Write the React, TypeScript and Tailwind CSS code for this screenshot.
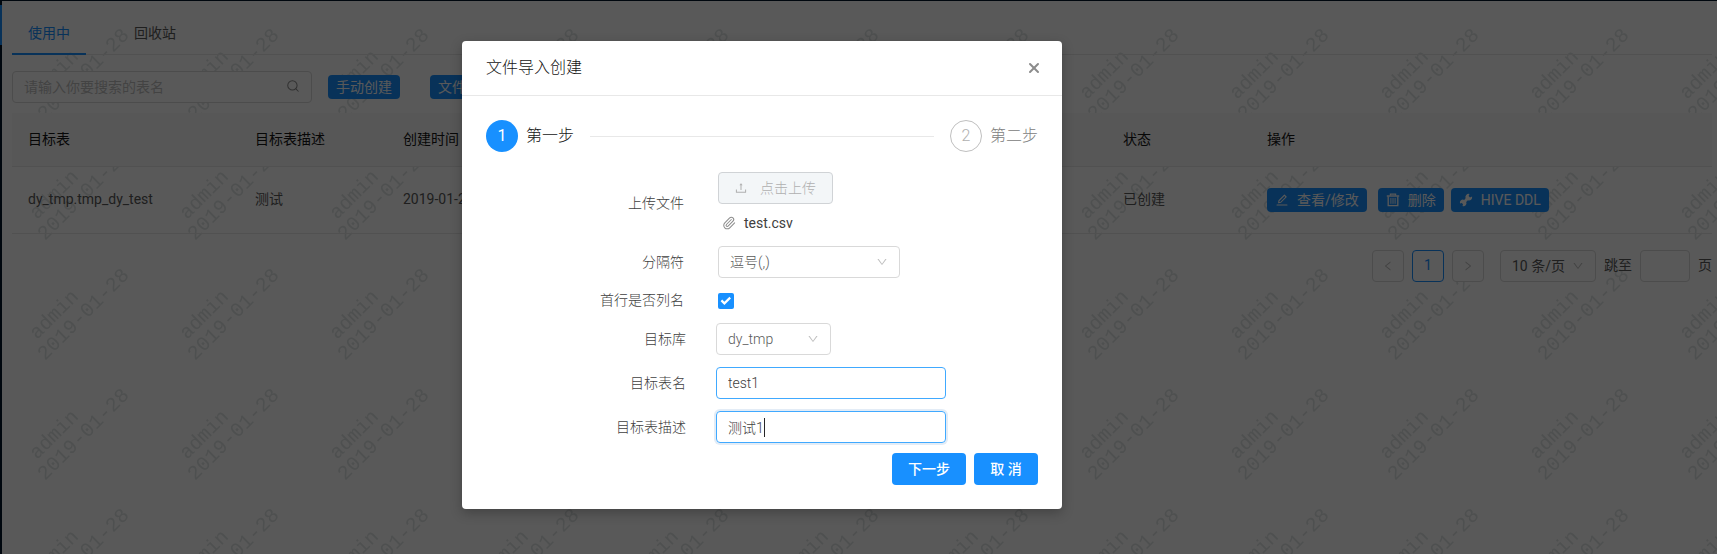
import React from "react";
import {
  AiOutlineDown,
  AiOutlineEdit,
  AiOutlineLeft,
  AiOutlineRight,
  AiOutlineUpload,
} from "react-icons/ai";
import { Paperclip, Search, X } from "lucide-react";

function Watermark() {
  return (
    <svg className="absolute inset-0 h-full w-full" aria-hidden="true">
      <defs>
        <pattern id="watermark" width="150" height="120" patternUnits="userSpaceOnUse" x="0" y="0">
          <g fill="#e0e4e4" fontFamily="'Liberation Mono', monospace" fontSize="20">
            <text transform="translate(35 99) rotate(-45)">admin</text>
            <text transform="translate(43 120) rotate(-45)">2019-01-28</text>
          </g>
        </pattern>
      </defs>
      <rect width="100%" height="100%" fill="url(#watermark)" />
    </svg>
  );
}

function TrashIcon() {
  return (
    <svg className="size-3.5" viewBox="0 0 14 14" fill="none" stroke="currentColor" aria-hidden="true">
      <path d="M0.8 3h12.4" strokeWidth="1.4" />
      <path d="M4.4 2.6V1.1h5.2v1.5" strokeWidth="1.2" />
      <path d="M2.2 3.4v9.3h9.6V3.4" strokeWidth="1.3" />
      <path d="M4.9 5v5.8M7 5v5.8M9.1 5v5.8" strokeWidth="0.9" />
    </svg>
  );
}

function WrenchIcon() {
  return (
    <svg className="size-3.5" viewBox="0 0 14 14" fill="currentColor" aria-hidden="true">
      <path d="M13.1 3.6 11 4.5 9.6 3.1l.9-2.1a3.2 3.2 0 0 0-3.9 4.2L5.2 6.9A3 3 0 0 0 1 10.5l1.8-.5 1.2 1.2-.5 1.8a3 3 0 0 0 3.7-4.1l1.7-1.6a3.2 3.2 0 0 0 4.2-3.7Z" />
    </svg>
  );
}

function SmallButton({ icon, children }: { icon?: React.ReactNode; children: React.ReactNode }) {
  return (
    <button
      type="button"
      className="inline-flex h-6 items-center gap-2 rounded bg-[#1890ff] px-2 text-sm whitespace-nowrap text-white"
    >
      {icon}
      <span>{children}</span>
    </button>
  );
}

function PageButton({ label, active, children }: { label: string; active?: boolean; children: React.ReactNode }) {
  return (
    <button
      type="button"
      aria-label={label}
      className={
        active
          ? "flex size-8 items-center justify-center rounded border border-[#1890ff] bg-white text-[#1890ff]"
          : "flex size-8 items-center justify-center rounded border border-[#d9d9d9] bg-white text-xs text-[#bfbfbf]"
      }
    >
      {children}
    </button>
  );
}

function Dropdown({ id, label, width, value }: { id: string; label?: string; width: string; value: string }) {
  return (
    <div className={"relative " + width}>
      <select
        id={id}
        aria-label={label}
        className="block h-8 w-full appearance-none rounded border border-[#d9d9d9] bg-white pr-6 pl-[11px] text-sm text-[#595959]"
      >
        <option>{value}</option>
      </select>
      <AiOutlineDown className="pointer-events-none absolute top-2.5 right-3 size-3 text-[#bfbfbf]" />
    </div>
  );
}

function TablePage() {
  return (
    <main className="relative min-w-0 flex-1 bg-white">
      <Watermark />
      <div className="relative pt-[9px] pr-[5px] pl-2.5">
        <nav className="flex h-[45px] gap-8 border-b border-[#e8e8e8]">
          <a href="#active" className="h-[45px] border-b-2 border-[#1890ff] px-4 pt-[13px] leading-[21px] text-[#1890ff]">
            使用中
          </a>
          <a href="#recycle" className="h-[45px] px-4 pt-[13px] leading-[21px]">
            回收站
          </a>
        </nav>

        <div className="mt-4 flex items-center">
          <div className="relative w-[300px]">
            <input
              type="text"
              aria-label="搜索表名"
              placeholder="请输入你要搜索的表名"
              className="block h-8 w-full rounded border border-[#d9d9d9] bg-white px-[11px] text-sm placeholder:text-[#bfbfbf]"
            />
            <Search strokeWidth={1.75} className="absolute top-2 right-3 size-3.5 text-[#8c8c8c]" />
          </div>
          <div className="ml-4 flex gap-[30px]">
            <SmallButton>手动创建</SmallButton>
            <SmallButton>文件导入创建</SmallButton>
          </div>
        </div>

        <table className="mt-2.5 w-full table-fixed border-collapse text-left">
          <colgroup>
            <col className="w-[227px]" />
            <col className="w-[148px]" />
            <col />
            <col className="w-36" />
            <col className="w-[461px]" />
          </colgroup>
          <thead>
            <tr className="h-[53px] border-b border-[#e8e8e8] bg-[#fafafa] text-[#141414]">
              <th className="px-4 font-normal">目标表</th>
              <th className="px-4 font-normal">目标表描述</th>
              <th className="px-4 font-normal">创建时间</th>
              <th className="px-4 font-normal">状态</th>
              <th className="px-4 font-normal">操作</th>
            </tr>
          </thead>
          <tbody>
            <tr className="h-[67px] border-b border-[#e8e8e8]">
              <td className="px-4">dy_tmp.tmp_dy_test</td>
              <td className="px-4">测试</td>
              <td className="px-4">2019-01-28</td>
              <td className="px-4">已创建</td>
              <td className="px-4">
                <div className="flex">
                  <SmallButton icon={<AiOutlineEdit className="size-3.5" />}>查看/修改</SmallButton>
                  <div className="ml-[11px] flex gap-[7px]">
                    <SmallButton icon={<TrashIcon />}>删除</SmallButton>
                    <SmallButton icon={<WrenchIcon />}>HIVE DDL</SmallButton>
                  </div>
                </div>
              </td>
            </tr>
          </tbody>
        </table>

        <div className="mt-4 flex items-center justify-end gap-2">
          <PageButton label="上一页">
            <AiOutlineLeft />
          </PageButton>
          <PageButton label="第 1 页" active>
            1
          </PageButton>
          <PageButton label="下一页">
            <AiOutlineRight />
          </PageButton>
          <div className="ml-2">
            <Dropdown id="page-size" label="每页条数" width="w-24" value="10 条/页" />
          </div>
          <label htmlFor="jump-page">跳至</label>
          <input id="jump-page" type="text" className="h-8 w-[50px] rounded border border-[#d9d9d9] bg-white px-2" />
          <span>页</span>
        </div>
      </div>
    </main>
  );
}

function ImportDialog() {
  const upperRow = "grid grid-cols-[198px_1fr] items-center gap-x-[34px]";
  const lowerRow = "grid grid-cols-[200px_1fr] items-center gap-x-[30px]";
  return (
    <section
      role="dialog"
      aria-label="文件导入创建"
      className="w-[600px] rounded bg-white font-light text-[#404040] shadow-[0_4px_12px_rgba(0,0,0,0.25)]"
    >
      <header className="flex h-[55px] items-center justify-between border-b border-[#e8e8e8] pr-5 pl-6">
        <h1 className="text-base font-light text-[#141414]">文件导入创建</h1>
        <button type="button" aria-label="关闭" className="text-[#8c8c8c]">
          <X strokeWidth={3} className="size-4" />
        </button>
      </header>

      <div className="px-6 pt-6 pb-6">
        <ol className="flex items-center text-base">
          <li className="flex flex-1 items-center">
            <span className="flex size-8 items-center justify-center rounded-full bg-[#1890ff] font-normal text-white">
              1
            </span>
            <span className="ml-2 text-[#141414]">第一步</span>
            <span className="mx-4 h-px flex-1 bg-[#e8e8e8]" />
          </li>
          <li className="flex items-center text-[#808080]">
            <span className="flex size-8 items-center justify-center rounded-full border border-[#bfbfbf] text-[#b0b0b0]">
              2
            </span>
            <span className="ml-2">第二步</span>
          </li>
        </ol>

        <form className="mt-5">
          <div className={upperRow}>
            <label htmlFor="upload" className="text-right">
              上传文件
            </label>
            <div>
              <button
                id="upload"
                type="button"
                disabled
                className="flex h-8 w-[115px] items-center gap-3 rounded border border-[#d0d3d6] bg-[#f3f6f8] px-[15px] text-[#b0b0b0]"
              >
                <AiOutlineUpload className="size-3.5" />
                点击上传
              </button>
              <div className="mt-2 flex h-[22px] items-center gap-2 pl-1">
                <Paperclip strokeWidth={1.75} className="size-3.5 text-[#8c8c8c]" />
                <span className="font-normal">test.csv</span>
              </div>
            </div>
          </div>
          <div className={upperRow + " mt-3"}>
            <label htmlFor="separator" className="text-right">
              分隔符
            </label>
            <Dropdown id="separator" width="w-[182px]" value="逗号(,)" />
          </div>
          <div className={upperRow + " mt-3"}>
            <label htmlFor="first-row" className="text-right">
              首行是否列名
            </label>
            <div className="relative size-4">
              <input
                id="first-row"
                type="checkbox"
                defaultChecked
                className="block size-4 appearance-none rounded-xs bg-[#1890ff]"
              />
              <svg className="pointer-events-none absolute inset-0" viewBox="0 0 16 16" fill="none" stroke="#fff" strokeWidth="2.2">
                <path d="M3.4 7.4 6.4 10.4 12.2 4.6" />
              </svg>
            </div>
          </div>
          <div className={lowerRow + " mt-3"}>
            <label htmlFor="database" className="text-right">
              目标库
            </label>
            <Dropdown id="database" width="w-[115px]" value="dy_tmp" />
          </div>
          <div className={lowerRow + " mt-3"}>
            <label htmlFor="table-name" className="text-right">
              目标表名
            </label>
            <input
              id="table-name"
              type="text"
              defaultValue="test1"
              className="h-8 w-[230px] rounded border border-[#40a9ff] px-[11px] text-sm"
            />
          </div>
          <div className={lowerRow + " mt-3"}>
            <label htmlFor="table-desc" className="text-right">
              目标表描述
            </label>
            <div className="relative w-[230px]">
              <input
                id="table-desc"
                type="text"
                defaultValue="测试1"
                className="block h-8 w-full rounded border border-[#40a9ff] px-[11px] text-sm shadow-[0_0_0_2px_rgba(24,100,180,0.12)]"
              />
              <span className="absolute top-[7px] left-12 h-[19px] w-px bg-[#262626]" />
            </div>
          </div>
          <div className="mt-2.5 flex justify-end gap-2 font-medium text-white">
            <button type="button" className="h-8 rounded bg-[#1890ff] px-4">
              下一步
            </button>
            <button type="button" className="h-8 w-16 rounded bg-[#1890ff]">
              取 消
            </button>
          </div>
        </form>
      </div>
    </section>
  );
}

export default function App() {
  return (
    <div className="relative flex min-h-screen bg-[#001529] pt-px font-['Roboto','Noto_Sans_CJK_SC',sans-serif] text-sm leading-[21px] text-[#595959]">
      <aside className="w-0.5 pt-1">
        <div className="h-10 bg-[#1890ff]" />
      </aside>
      <TablePage />
      <div className="absolute inset-0 bg-black/65 pt-[41px] pl-[462px]">
        <ImportDialog />
      </div>
    </div>
  );
}
